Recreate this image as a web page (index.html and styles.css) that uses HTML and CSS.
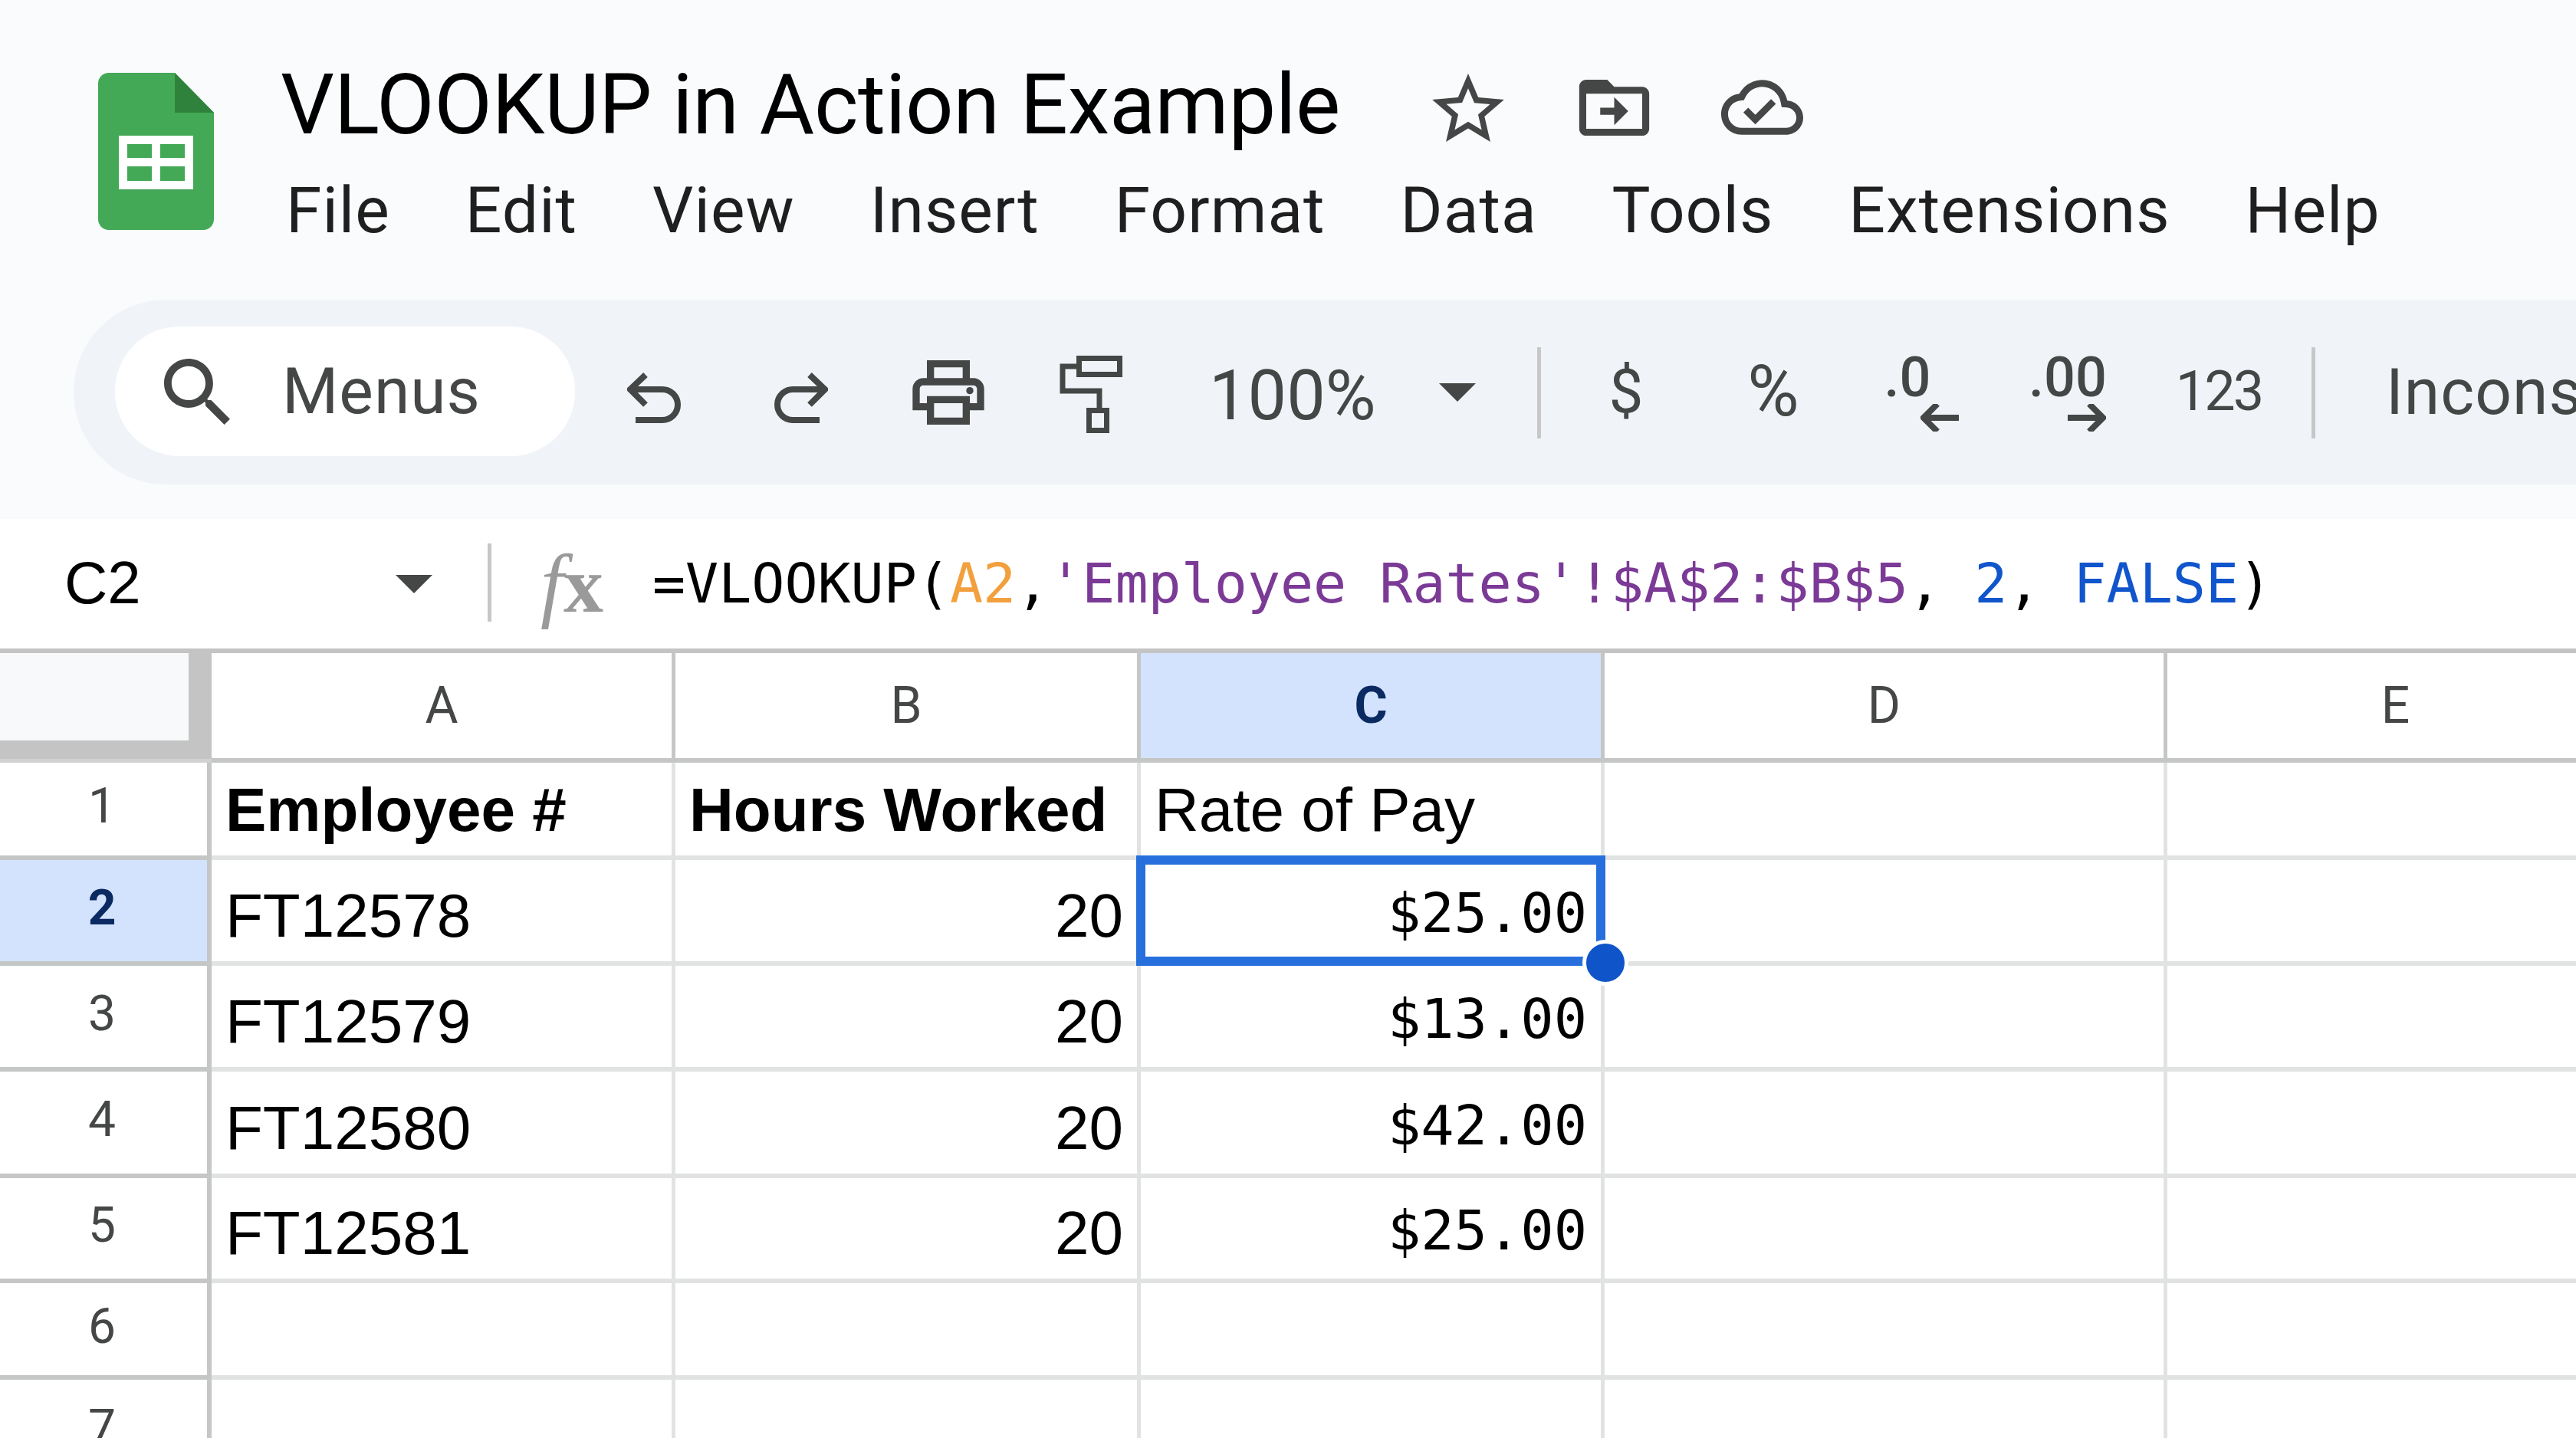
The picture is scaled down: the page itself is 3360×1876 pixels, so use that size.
FILE: index.html
```html
<!DOCTYPE html>
<html lang="en">
	<head>
		<meta charset="utf-8">
		<title>VLOOKUP in Action Example</title>
		<link rel="stylesheet" href="styles.css">
	</head>
	<body>
		<div class="top">
			<header class="doc-header">
				<svg class="logo" viewBox="0 0 151 205">
					<path d="M14 0H100L151 52V191a14 14 0 0 1-14 14H14A14 14 0 0 1 0 191V14A14 14 0 0 1 14 0Z" fill="#43a956"/>
					<path d="M100 0L151 52H100Z" fill="#2f823c"/>
					<path fill-rule="evenodd" d="M27 82H124V152H27ZM38 93V111H70V93ZM81 93V111H113V93ZM38 122V141H70V122ZM81 122V141H113V122Z" fill="#fff"/>
				</svg>
				<div class="doc-info">
					<div class="title-row">
						<h1 class="doc-title">VLOOKUP in Action Example</h1>
						<svg class="icon-star" viewBox="2 2 20 19"><path d="M22 9.24l-7.19-.62L12 2 9.19 8.63 2 9.24l5.46 4.73L5.82 21 12 17.27 18.18 21l-1.63-7.03L22 9.24zM12 15.4l-3.76 2.27 1-4.28-3.32-2.88 4.38-.38L12 6.1l1.71 4.04 4.38.38-3.32 2.88 1 4.28L12 15.4z"/></svg>
						<svg class="icon-folder" viewBox="2 4 20 16"><path d="M20 6h-8l-2-2H4c-1.1 0-2 .9-2 2v12c0 1.1.9 2 2 2h16c1.1 0 2-.9 2-2V8c0-1.1-.9-2-2-2zm0 12H4V8h16v10z"/><path d="M12 17l4-4-4-4v3H8v2h4z"/></svg>
						<svg class="icon-cloud" viewBox="0 4 24 16"><path d="M19.35 10.04C18.67 6.59 15.64 4 12 4 9.11 4 6.6 5.64 5.35 8.04 2.34 8.36 0 10.91 0 14c0 3.31 2.69 6 6 6h13c2.76 0 5-2.24 5-5 0-2.64-2.05-4.78-4.65-4.96zM19 18H6c-2.21 0-4-1.79-4-4 0-2.05 1.53-3.76 3.56-3.97l1.07-.11.5-.95C8.08 7.14 9.94 6 12 6c2.62 0 4.88 1.86 5.39 4.43l.3 1.5 1.53.11c1.56.1 2.78 1.41 2.78 2.96 0 1.65-1.35 3-3 3zm-9-3.82l-2.09-2.09L6.5 13.5 10 17l6.01-6.01-1.41-1.41z"/></svg>
					</div>
					<nav class="menu">
						<span>File</span>
						<span>Edit</span>
						<span>View</span>
						<span>Insert</span>
						<span>Format</span>
						<span>Data</span>
						<span>Tools</span>
						<span>Extensions</span>
						<span>Help</span>
					</nav>
				</div>
			</header>

			<div class="toolbar">
				<div class="search">
					<svg class="icon-search" viewBox="3 3 17.5 17.5"><path d="M15.5 14h-.79l-.28-.27C15.41 12.59 16 11.11 16 9.5 16 5.91 13.09 3 9.5 3S3 5.91 3 9.5 5.91 16 9.5 16c1.61 0 3.09-.59 4.23-1.57l.27.28v.79l5 4.99L20.49 19l-4.99-5zm-6 0C7.01 14 5 11.99 5 9.5S7.01 5 9.5 5 14 7.01 14 9.5 11.99 14 9.5 14z"/></svg>
					<span>Menus</span>
				</div>
				<div class="tool">
					<svg class="icon-undo" viewBox="0 0 70 66"><path d="M24 3L4 22L24 42M5 22H46A20 20 0 0 1 46 62H11"/></svg>
				</div>
				<div class="tool">
					<svg class="icon-undo" viewBox="0 0 70 66"><path d="M46 3L66 22L46 42M65 22H24A20 20 0 0 0 24 62H59"/></svg>
				</div>
				<div class="tool">
					<svg class="icon-print" viewBox="2 3 20 18"><path d="M19 8h-1V3H6v5H5c-1.66 0-3 1.34-3 3v6h4v4h12v-4h4v-6c0-1.66-1.34-3-3-3zM8 5h8v3H8V5zm8 12v2H8v-4h8v2zm2-2v-2H6v2H4v-4c0-.55.45-1 1-1h14c.55 0 1 .45 1 1v4h-2z"/><circle cx="18" cy="11.5" r="1"/></svg>
				</div>
				<div class="tool">
					<svg class="icon-paint" viewBox="0 0 84 101"><path d="M27.5 3.500H80.500V24.500H27.500ZM26 14H6V46H54V68M40.500 71.500H63.500V97.500H40.500Z"/></svg>
				</div>
				<div class="zoom-level">
					<span>100%</span>
					<i class="caret"></i>
				</div>
				<div class="divider divider-first"></div>
				<div class="tool tool-text">$</div>
				<div class="tool tool-text tool-pct">%</div>
				<div class="tool tool-dec dec-one">
					<span>.0</span>
					<svg class="icon-dec" viewBox="0 0 50 36"><path d="M22 0L4 18L22 36M6 18H50"/></svg>
				</div>
				<div class="tool tool-dec">
					<span>.00</span>
					<svg class="icon-dec" viewBox="0 0 50 36"><path d="M28 0L46 18L28 36M44 18H0"/></svg>
				</div>
				<div class="tool tool-text tool-num">123</div>
				<div class="divider"></div>
				<div class="font-name">Inconsolata</div>
			</div>
		</div>

		<div class="formula-bar">
			<div class="name-box">
				<span>C2</span>
				<i class="caret"></i>
			</div>
			<div class="divider-tall"></div>
			<div class="fx"><span class="fx-f">f</span><span class="fx-x">x</span></div>
			<div class="formula">=VLOOKUP(<span class="ref-a">A2</span>,<span class="ref-b">'Employee Rates'!$A$2:$B$5</span>, <span class="lit">2</span>, <span class="lit">FALSE</span>)</div>
		</div>

		<div class="sheet">
			<div class="corner"><div class="corner-box"></div></div>
			<div class="col-head">A</div>
			<div class="col-head">B</div>
			<div class="col-head selected">C</div>
			<div class="col-head">D</div>
			<div class="col-head">E</div>

			<div class="row-head">1</div>
			<div class="cell bold">Employee #</div>
			<div class="cell bold">Hours Worked</div>
			<div class="cell">Rate of Pay</div>
			<div class="cell"></div>
			<div class="cell"></div>

			<div class="row-head selected">2</div>
			<div class="cell">FT12578</div>
			<div class="cell num">20</div>
			<div class="cell money">$25.00</div>
			<div class="cell"></div>
			<div class="cell"></div>

			<div class="row-head">3</div>
			<div class="cell">FT12579</div>
			<div class="cell num">20</div>
			<div class="cell money">$13.00</div>
			<div class="cell"></div>
			<div class="cell"></div>

			<div class="row-head">4</div>
			<div class="cell">FT12580</div>
			<div class="cell num">20</div>
			<div class="cell money">$42.00</div>
			<div class="cell"></div>
			<div class="cell"></div>

			<div class="row-head">5</div>
			<div class="cell">FT12581</div>
			<div class="cell num">20</div>
			<div class="cell money">$25.00</div>
			<div class="cell"></div>
			<div class="cell"></div>

			<div class="row-head">6</div>
			<div class="cell"></div>
			<div class="cell"></div>
			<div class="cell"></div>
			<div class="cell"></div>
			<div class="cell"></div>

			<div class="row-head">7</div>
			<div class="cell"></div>
			<div class="cell"></div>
			<div class="cell"></div>
			<div class="cell"></div>
			<div class="cell"></div>

			<div class="selection"><div class="handle"></div></div>
		</div>
	</body>
</html>
```

FILE: styles.css
```css
* {
	box-sizing: border-box;
}
html, body {
	margin: 0;
	height: 1876px;
	overflow: hidden;
	background-color: #fff;
}
body {
	font-family: "Roboto", sans-serif;
	color: #000;
}

/* Title and menus */
.top {
	height: 677px;
	background-color: #f9fbfd;
}
.doc-header {
	display: flex;
	height: 391px;
	padding: 95px 0 0 128px;
}
.logo {
	width: 151px;
	height: 205px;
}
.doc-info {
	margin-left: 87px;
	margin-top: -23px;
}
.title-row {
	display: flex;
	align-items: center;
	height: 130px;
}
.doc-title {
	margin: 0;
	font-size: 110px;
	font-weight: 400;
	line-height: 130px;
	letter-spacing: -0.4px;
	white-space: nowrap;
}
.title-row svg {
	fill: #444746;
}
.icon-star {
	width: 94px;
	height: 89px;
	margin-left: 120px;
	margin-top: 6px;
}
.icon-folder {
	width: 95px;
	height: 73px;
	margin-left: 96px;
	margin-top: 6px;
}
.icon-cloud {
	width: 107px;
	height: 74px;
	margin-left: 92px;
	margin-top: 6px;
}
.menu {
	display: flex;
	gap: 98px;
	margin-top: 23px;
	margin-left: 7px;
	font-size: 84px;
	line-height: 100px;
	letter-spacing: 1px;
	color: #1f1f1f;
}

/* Toolbar */
.toolbar {
	display: flex;
	align-items: center;
	width: 3400px;
	height: 241px;
	margin-left: 96px;
	padding-left: 54px;
	border-radius: 120px;
	background-color: #f0f4f9;
	color: #444746;
	overflow: hidden;
}
.search {
	display: flex;
	align-items: center;
	flex: none;
	width: 600px;
	height: 169px;
	margin-right: 7px;
	margin-top: -2px;
	padding-left: 64px;
	border-radius: 84px;
	background-color: #fff;
	font-size: 84px;
	letter-spacing: 1px;
}
.icon-search {
	width: 86px;
	height: 86px;
	margin-right: 68px;
	fill: #444746;
}
.tool {
	display: flex;
	align-items: center;
	justify-content: center;
	flex: none;
	width: 192px;
	height: 130px;
}
.icon-undo {
	width: 70px;
	height: 66px;
	margin-top: 14px;
	fill: none;
	stroke: #444746;
	stroke-width: 8;
}
.icon-print {
	width: 94px;
	height: 84px;
	fill: #444746;
}
.icon-paint {
	width: 84px;
	height: 101px;
	margin-right: 14px;
	margin-top: 6px;
	fill: none;
	stroke: #444746;
	stroke-width: 7;
}
.zoom-level {
	display: flex;
	align-items: center;
	flex: none;
	width: 480px;
	padding-left: 52px;
	font-size: 90px;
}
.zoom-level span {
	margin-top: 10px;
}
.caret {
	display: block;
	width: 0;
	height: 0;
	border-left: 24px solid transparent;
	border-right: 24px solid transparent;
	border-top: 24px solid #444746;
}
.zoom-level .caret {
	margin-left: 82px;
}
.divider {
	flex: none;
	width: 5px;
	height: 119px;
	margin-top: 2px;
	background-color: #c7c7c7;
}
.divider-first {
	margin-right: 15px;
}
.tool-text {
	font-size: 80px;
	margin-top: -2px;
}
.tool-pct {
	font-size: 92px;
}
.tool-num {
	margin-left: 5px;
	margin-right: 25px;
	font-size: 72px;
	letter-spacing: -3px;
}
.tool-dec {
	flex-direction: column;
	align-items: center;
	height: 119px;
	font-size: 72px;
	font-weight: 500;
	line-height: 72px;
}
.tool-dec span {
	margin-top: -4px;
}
.dec-one span {
	margin-right: 34px;
}
.icon-dec {
	width: 50px;
	height: 36px;
	margin-left: 50px;
	margin-top: -2px;
	fill: none;
	stroke: #444746;
	stroke-width: 8;
}
.font-name {
	flex: none;
	margin-left: 92px;
	font-size: 84px;
	letter-spacing: 1px;
}

/* Formula bar */
.formula-bar {
	display: flex;
	align-items: center;
	height: 169px;
	background-color: #fff;
}
.name-box {
	display: flex;
	align-items: center;
	width: 636px;
	margin-top: -3px;
	padding-left: 84px;
	font-family: "Liberation Sans", sans-serif;
	font-size: 78px;
}
.name-box .caret {
	margin-left: 332px;
	margin-top: 4px;
}
.divider-tall {
	width: 5px;
	height: 102px;
	margin-top: -4px;
	background-color: #c7c7c7;
}
.fx {
	width: 212px;
	padding-left: 64px;
	font-family: "Liberation Serif", serif;
	font-size: 104px;
	font-style: italic;
	color: #9a9a9a;
}
.fx-f {
	font-size: 108px;
}
.fx-x {
	font-weight: 700;
	font-style: normal;
}
.formula {
	margin-left: -2px;
	font-family: "DejaVu Sans Mono", monospace;
	font-size: 71.600px;
	white-space: nowrap;
}
.ref-a {
	color: #f2a03d;
}
.ref-b {
	color: #7b3a96;
}
.lit {
	color: #1155cc;
}

/* Grid */
.sheet {
	position: relative;
	display: grid;
	grid-template-columns: 276px 605px 607px 605px 734px 600px;
	grid-template-rows: 143px 127px 138px 138px 139px 137px 126px 138px;
	border-top: 6px solid #c4c4c4;
	font-family: "Liberation Sans", sans-serif;
	font-size: 80px;
}
.corner {
	background-color: #c4c4c4;
	border-bottom: 5px solid #d0d2d2;
}
.corner-box {
	width: 246px;
	height: 114px;
	background-color: #f8f9fb;
}
.col-head {
	display: flex;
	align-items: center;
	justify-content: center;
	border-right: 5px solid #c4c7c5;
	border-bottom: 6px solid #c4c7c5;
	font-family: "Roboto", sans-serif;
	font-size: 66px;
	color: #444746;
}
.row-head {
	display: flex;
	align-items: center;
	justify-content: center;
	padding-bottom: 8px;
	padding-right: 4px;
	border-right: 6px solid #c4c7c5;
	border-bottom: 6px solid #c4c7c5;
	font-family: "Roboto", sans-serif;
	font-size: 64px;
	color: #444746;
}
.selected {
	background-color: #d3e3fd;
	font-weight: 700;
	color: #0b2a61;
}
.cell {
	display: flex;
	align-items: flex-end;
	padding: 0 18px 14px;
	border-right: 5px solid #e1e3e3;
	border-bottom: 6px solid #e1e3e3;
	line-height: 90px;
	white-space: nowrap;
}
.bold {
	font-weight: 700;
}
.num {
	justify-content: flex-end;
}
.money {
	justify-content: flex-end;
	padding-bottom: 18px;
	font-family: "DejaVu Sans Mono", monospace;
	font-size: 72px;
}
.selection {
	position: absolute;
	top: 264px;
	left: 1482px;
	width: 612px;
	height: 144px;
	border: 12px solid #276fdc;
}
.handle {
	position: absolute;
	right: -42px;
	bottom: -38px;
	width: 60px;
	height: 60px;
	border: 5px solid #fff;
	border-radius: 50%;
	background-color: #0f55c9;
}
```
